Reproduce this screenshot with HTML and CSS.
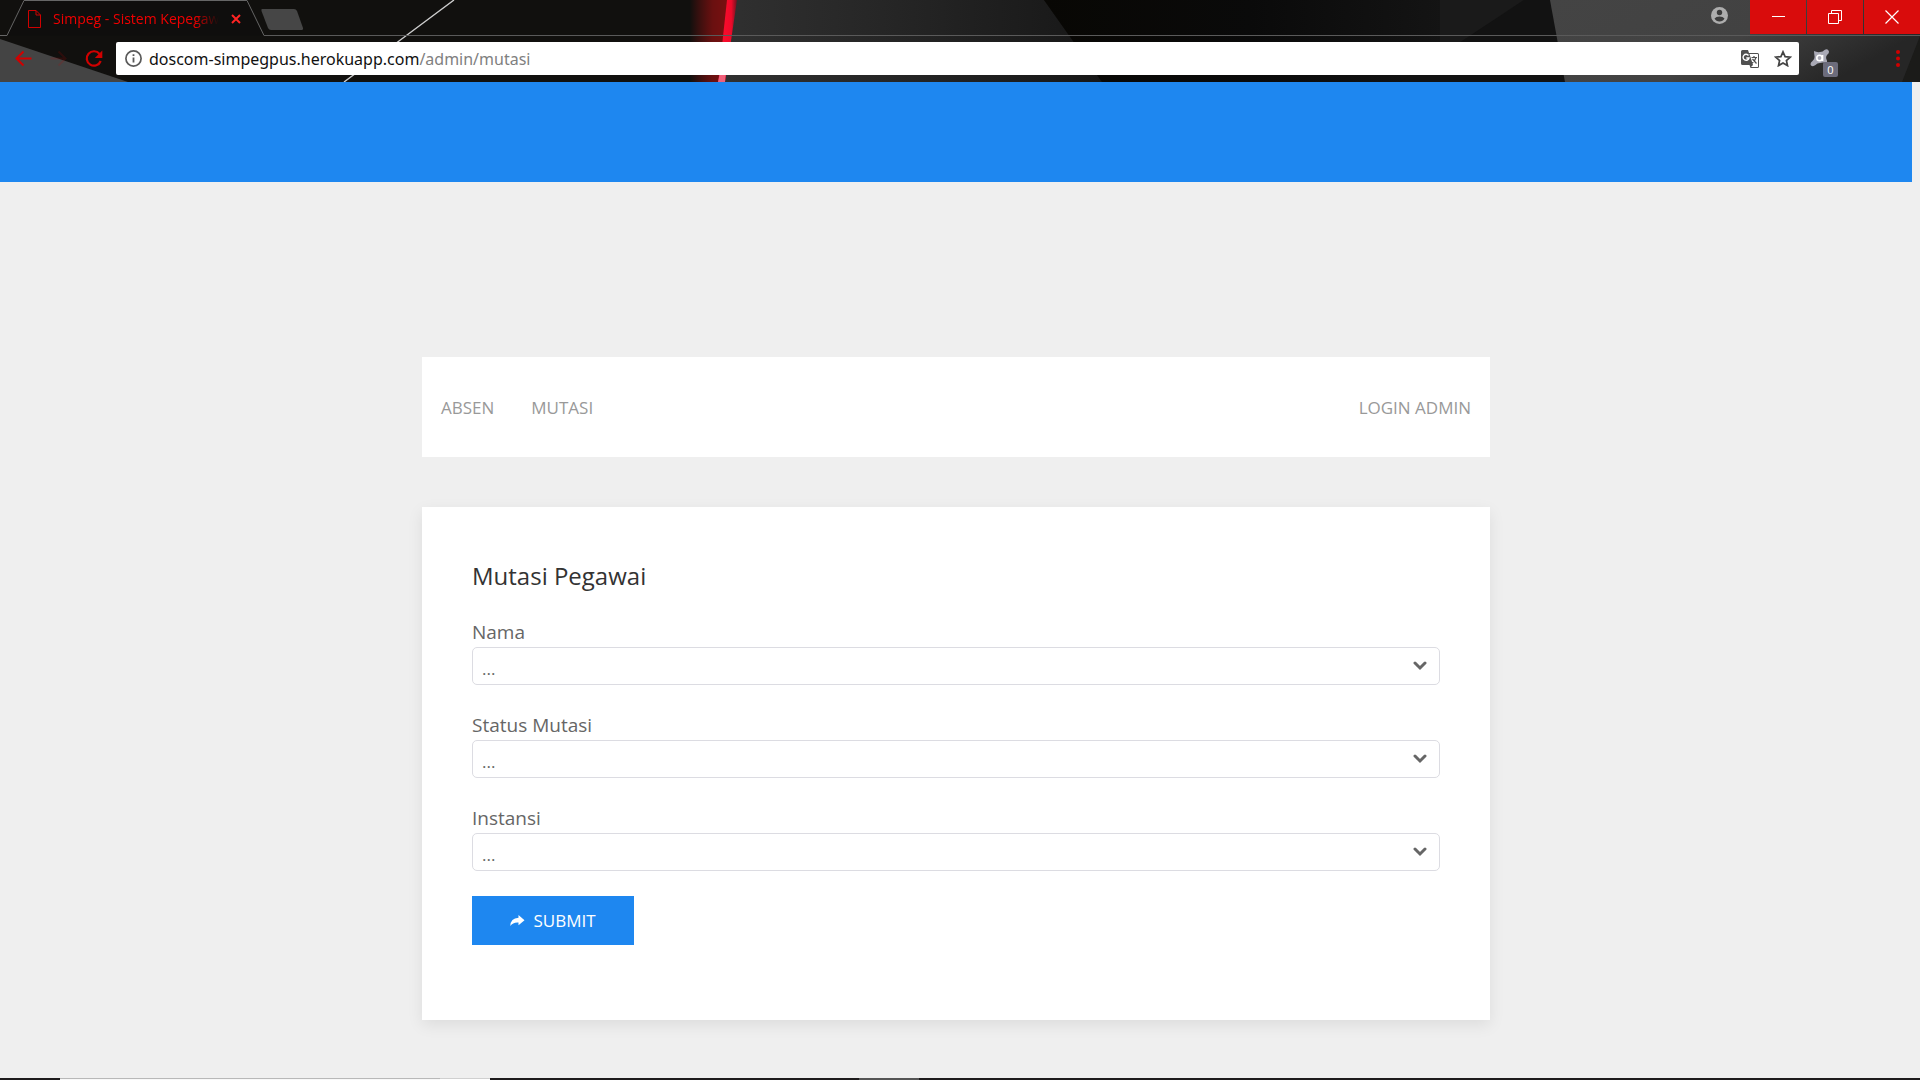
FILE: index.html
```html
<!DOCTYPE html>
<html lang="id">
<head>
<meta charset="utf-8">
<title>Simpeg - Sistem Kepegawaian</title>
<link rel="stylesheet" href="styles.css">
</head>
<body>
<header class="browser">
  <svg class="backdrop" viewBox="0 0 1920 82" preserveAspectRatio="none" aria-hidden="true">
    <defs>
      <linearGradient id="glow"><stop offset="0" stop-color="#7a1010" stop-opacity="0"/><stop offset="0.6" stop-color="#6a1010"/><stop offset="1" stop-color="#7a1010"/></linearGradient>
      <linearGradient id="panel"><stop offset="0" stop-color="#303030"/><stop offset="0.5" stop-color="#242424"/><stop offset="1" stop-color="#171717"/></linearGradient>
      <linearGradient id="dim"><stop offset="0" stop-color="#080704"/><stop offset="0.4" stop-color="#0a0a0a"/><stop offset="1" stop-color="#1a1a1a"/></linearGradient>
      <linearGradient id="corner" x2="1" y2="0.4"><stop offset="0" stop-color="#444"/><stop offset="0.6" stop-color="#424242"/><stop offset="1" stop-color="#262626"/></linearGradient>
      <linearGradient id="beam"><stop offset="0" stop-color="#c80a20"/><stop offset="0.3" stop-color="#fa0c2c"/><stop offset="0.7" stop-color="#ee0a2a"/><stop offset="1" stop-color="#6a1420"/></linearGradient>
    </defs>
    <rect width="1920" height="82" fill="#11100e"/>
    <path d="M0 39L128 82H0z" fill="#444"/>
    <path d="M690 0H728L718 82H690z" fill="url(#glow)"/>
    <path d="M736 0H1044L1102 82H725z" fill="url(#panel)"/>
    <path d="M1044 0H1560V82H1102z" fill="url(#dim)"/>
    <path d="M1440 0H1524L1455 46L1440 50z" fill="#1a1a1a"/>
    <path d="M1524 0H1552L1566 82H1400z" fill="#121212"/>
    <path d="M1550 0H1920V82H1565z" fill="url(#corner)"/>
    <path d="M1920 36V82H1902z" fill="#1b1b19"/>
    <path d="M727 0H737L725 82H718z" fill="url(#beam)"/>
    <path d="M720 72H726L725 82H718z" fill="#f0607a"/>
    <path d="M454 0L399 41L344 82" fill="none" stroke="#ccc" stroke-width="1.400"/>
  </svg>

  <div class="strip">
    <div class="tab">
      <svg class="tab-shape" width="265" height="36" viewBox="0 0 265 36" aria-hidden="true"><path d="M0 35.5H7L24 .5H247L264 35.5" fill="#0d0c0b" fill-opacity=".5" stroke="#666"/></svg>
      <svg class="page-icon" width="13" height="18" viewBox="0 0 13 18" fill="none" stroke="#d00000" stroke-width="1"><path d="M.5.5H8L12.500 5V17.500H.5zM8 .5V5H12.500"/></svg>
      <span class="tab-title">Simpeg - Sistem Kepegawaian</span>
      <button class="plain tab-close" aria-label="Close tab"><svg width="10" height="10" viewBox="0 0 10 10" stroke="#ff2424" stroke-width="2"><path d="M1 1L9 9M9 1L1 9"/></svg></button>
    </div>
    <div class="strip-rest">
      <button class="plain new-tab" aria-label="New tab"><svg width="43" height="22" viewBox="0 0 43 22"><path d="M1 0H33Q35 0 36 2L42 19Q42.500 21 40 21H10Q8 21 7 19L.5 2Q0 0 1 0z" fill="#464646"/></svg></button>
      <button class="plain profile" aria-label="Profile"><svg width="17" height="17" viewBox="0 0 17 17"><circle cx="8.500" cy="8.500" r="8.500" fill="#adadad"/><circle cx="8.500" cy="5.500" r="2.700" fill="#3c3c3c"/><path d="M3.500 11.500Q5 9.500 8.500 9.500T13.500 11.500Q12 14.500 8.500 14.500T3.500 11.500z" fill="#3c3c3c"/></svg></button>
      <div class="window-buttons">
        <button aria-label="Minimize"><svg width="13" height="13" viewBox="0 0 13 13" stroke="#fff"><path d="M0 5.500H13"/></svg></button>
        <button aria-label="Restore"><svg width="14" height="14" viewBox="0 0 14 14" stroke="#fff" fill="none"><path d="M.5 3.500H10.500V13.500H.5zM3.500 3V.5H13.500V10.500H11"/></svg></button>
        <button aria-label="Close"><svg width="14" height="14" viewBox="0 0 14 14" stroke="#fff" stroke-width="1.200"><path d="M.5.5L13.500 13.500M13.500.5L.5 13.500"/></svg></button>
      </div>
    </div>
  </div>

  <div class="toolbar">
    <div class="history">
      <button class="plain" aria-label="Back"><svg width="17" height="17" viewBox="0 0 17 17" fill="none" stroke="#d00000" stroke-width="2"><path d="M16.500 8.500H2M8.500 1.500L1.500 8.500L8.500 15.500"/></svg></button>
      <button class="plain" aria-label="Forward"><svg width="17" height="17" viewBox="0 0 17 17" fill="none" stroke="#d00000" stroke-opacity="0.15" stroke-width="2"><path d="M.5 8.500H15M8.500 1.500L15.500 8.500L8.500 15.500"/></svg></button>
      <button class="plain" aria-label="Reload"><svg width="18" height="18" viewBox="0 0 18 18"><path d="M14.600 4A7.200 7.200 0 1 0 15.700 11" fill="none" stroke="#d00000" stroke-width="2.200"/><path d="M17.300.5V8H9.800z" fill="#d00000"/></svg></button>
    </div>
    <div class="omnibox">
      <svg width="17" height="17" viewBox="0 0 17 17"><circle cx="8.500" cy="8.500" r="7.600" fill="none" stroke="#5a5a5a" stroke-width="1.700"/><path d="M7.600 7.500H9.400V12.500H7.600zM7.600 4.300H9.400V6H7.600z" fill="#5a5a5a"/></svg>
      <div class="address" role="textbox" aria-label="Address"><span class="host">doscom-simpegpus.herokuapp.com</span>/admin/mutasi</div>
      <button class="plain" aria-label="Translate"><svg width="18" height="18" viewBox="0 0 18 18"><path d="M1.500 0H7L8 3H16.500Q18 3 18 4.500V16.500Q18 18 16.500 18H9.500L8.500 15H1.500Q0 15 0 13.500V1.500Q0 0 1.500 0z" fill="#505050"/><path d="M8.500 4H16.500Q17 4 17 4.500V16.500Q17 17 16.500 17H10L12 15z" fill="#fff"/><path d="M7.500 5.500A3 3 0 1 0 8 8H5.300" fill="none" stroke="#fff" stroke-width="1.400"/><path d="M10.500 7.500H16M13 6V7.500M15 7.500Q14 11.500 10.500 13.500M11.500 9L15.500 13.500" fill="none" stroke="#505050" stroke-width="1.200"/></svg></button>
      <button class="plain" aria-label="Bookmark"><svg width="18" height="17" viewBox="0 0 18 17"><path d="M9 1.800L11.100 6.600L16.300 7.100L12.400 10.500L13.500 15.600L9 12.900L4.500 15.600L5.600 10.500L1.700 7.100L6.900 6.600z" fill="none" stroke="#444" stroke-width="1.700"/></svg></button>
    </div>
    <div class="extension">
      <svg width="20" height="18" viewBox="0 0 20 18"><path d="M4 2Q7 3.500 10 3Q13 3 14.500 1Q17-.5 18.500 1.500Q20 4 17 6Q15.500 8 16.500 10.500Q18 13 16 14Q13 13 10 14Q7 14 5.500 16Q3 18 1 16.500Q-.5 14 2.500 12Q5 10 4.500 7Q4 4 4 2z" fill="#a9a9b5"/><circle cx="9.500" cy="9" r="2.700" fill="none" stroke="#fff" stroke-width="1.600"/><path d="M12.600 6V12" stroke="#fff" stroke-width="1.500"/></svg>
      <span class="badge">0</span>
    </div>
    <button class="plain menu" aria-label="Menu"><svg width="4" height="17" viewBox="0 0 4 17" fill="#d00000"><circle cx="2" cy="2" r="2"/><circle cx="2" cy="8.500" r="2"/><circle cx="2" cy="15" r="2"/></svg></button>
  </div>
</header>

<div class="page">
  <div class="banner"></div>
  <main class="content">
    <nav class="navbar">
      <a href="#absen">Absen</a>
      <a href="#mutasi">Mutasi</a>
      <a class="login" href="#login">Login Admin</a>
    </nav>
    <form class="card">
      <h1>Mutasi Pegawai</h1>
      <div class="field">
        <label for="nama">Nama</label>
        <div class="select"><select id="nama"><option>...</option></select><svg width="14" height="10" viewBox="0 0 14 10"><path d="M2 2L7 7L12 2" /></svg></div>
      </div>
      <div class="field">
        <label for="status">Status Mutasi</label>
        <div class="select"><select id="status"><option>...</option></select><svg width="14" height="10" viewBox="0 0 14 10"><path d="M2 2L7 7L12 2" /></svg></div>
      </div>
      <div class="field">
        <label for="instansi">Instansi</label>
        <div class="select"><select id="instansi"><option>...</option></select><svg width="14" height="10" viewBox="0 0 14 10"><path d="M2 2L7 7L12 2" /></svg></div>
      </div>
      <button class="submit" type="button"><svg width="15" height="11" viewBox="0 0 15 11"><path d="M8.500 0L14.500 5.200L8.500 10.200V7.500Q3 7 .3 11Q.5 3.200 8.500 2.700z" fill="#fff"/></svg>Submit</button>
    </form>
  </main>
</div>

<footer class="taskbar"><span class="search"></span><span class="mic"></span><span class="running"></span></footer>
</body>
</html>
```
FILE: styles.css
```css
* { box-sizing: border-box; }

body {
  margin: 0;
  min-height: 100vh;
  display: flex;
  flex-direction: column;
  background: #efefef;
  color: #666;
  font-family: "Open Sans", "Noto Sans", sans-serif;
}

svg { display: block; flex: none; }
button, select { font: inherit; border: 0; }
.plain { padding: 0; background: none; }

/* Browser frame */
.browser { position: relative; height: 82px; background: #11100e; }
.backdrop { position: absolute; inset: 0; width: 100%; height: 100%; }
.strip, .toolbar { position: relative; display: flex; }
.strip { height: 36px; }
.tab {
  position: relative;
  width: 264px;
  display: flex;
  align-items: center;
  padding: 2px 23px 0 28px;
}
.tab-shape { position: absolute; left: 0; top: 0; }
.page-icon, .tab-title, .tab-close { position: relative; }
.tab-title {
  flex: 1;
  margin: 0 12px;
  overflow: hidden;
  white-space: nowrap;
  color: #f00000;
  font-size: 14px;
  line-height: 20px;
  -webkit-mask-image: linear-gradient(90deg, #000 85%, transparent);
  mask-image: linear-gradient(90deg, #000 85%, transparent);
}
.strip-rest {
  flex: 1;
  display: flex;
  align-items: flex-start;
  border-bottom: 1px solid #5a5a5a;
}
.new-tab { margin: 9px auto 0 -3px; }
.profile { margin: 7px 22px 0 0; }
.window-buttons { display: flex; gap: 1px; }
.window-buttons button {
  width: 56px;
  height: 34px;
  padding: 0;
  display: grid;
  place-items: center;
  background: #d90c0c;
}
.toolbar { height: 46px; align-items: center; padding-bottom: 1px; }
.history { width: 116px; display: flex; gap: 18px; padding-left: 15px; }
.omnibox {
  flex: 1;
  height: 33px;
  display: flex;
  align-items: center;
  gap: 15px;
  padding: 0 7px 0 9px;
  border-radius: 2px;
  background: #fff;
}
.address {
  flex: 1;
  margin-left: -8px;
  color: #808080;
  font-family: "Noto Sans", "Open Sans", sans-serif;
  font-size: 16px;
  line-height: 24px;
  white-space: nowrap;
}
.host { color: #111; }
.extension { position: relative; width: 28px; height: 28px; margin: 8px 0 0 11px; }
.badge {
  position: absolute;
  right: 0;
  bottom: 0;
  width: 15px;
  height: 15px;
  border-radius: 2px;
  background: #6c6c7c;
  color: #fff;
  font-size: 11px;
  line-height: 15px;
  text-align: center;
}
.menu { margin: 0 20px 0 58px; }

/* Page */
.page { flex: 1; padding-right: 8px; }
.banner { height: 100px; background: #1e87f0; }
.content { width: 92%; max-width: 1068px; margin: 175px auto 50px; }
.navbar {
  height: 100px;
  display: flex;
  align-items: center;
  gap: 37px;
  padding: 0 19px;
  margin-bottom: 50px;
  background: #fff;
}
.navbar a {
  color: #999;
  font-size: 17px;
  text-decoration: none;
  text-transform: uppercase;
}
.navbar .login { margin-left: auto; }
.card {
  padding: 50px 50px 75px;
  background: #fff;
  box-shadow: 0 5px 15px rgba(0, 0, 0, 0.08);
}
h1 {
  margin: 0 0 22px;
  color: #333;
  font-size: 24px;
  font-weight: 400;
  line-height: 38px;
}
.field { margin-bottom: 25px; }
label { display: block; font-size: 19px; line-height: 30px; }
.select { position: relative; }
.select select {
  display: block;
  width: 100%;
  height: 38px;
  padding: 5px 9px 0;
  border: 1px solid #dcdce2;
  border-radius: 5px;
  background: #fff;
  color: #666;
  font-size: 17px;
  appearance: none;
}
.select svg {
  position: absolute;
  right: 13px;
  top: 14px;
  fill: none;
  stroke: #666;
  stroke-width: 3;
  stroke-linecap: round;
  pointer-events: none;
}
.submit {
  width: 162px;
  height: 49px;
  display: flex;
  align-items: center;
  justify-content: center;
  gap: 8px;
  background: #1e87f0;
  color: #fff;
  font-size: 17px;
  text-transform: uppercase;
}

/* Desktop taskbar edge */
.taskbar { height: 2px; display: flex; padding-left: 60px; background: #1e1b1c; }
.search { width: 380px; border-top: 1px solid #b8b8b8; background: #f8f8f8; }
.mic { width: 50px; border-top: 1px solid #d0d0d0; background: #fff; }
.running { width: 60px; margin-left: 369px; background: #555; }
```
